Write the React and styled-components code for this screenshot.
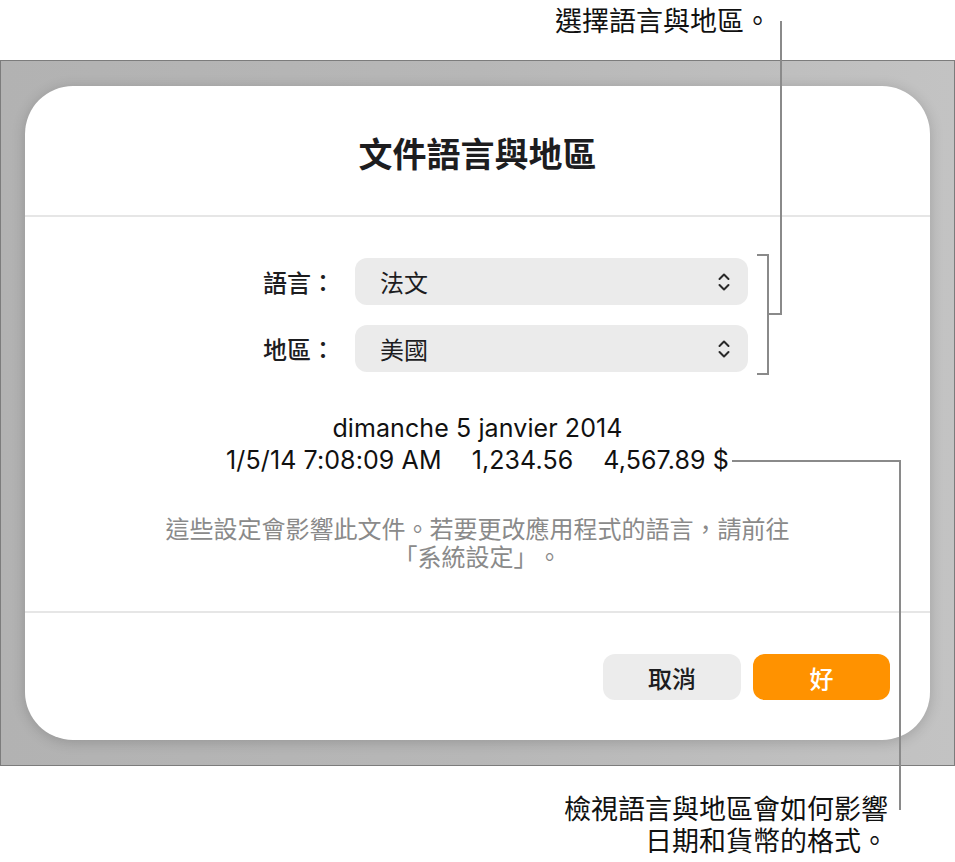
import React from "react";
import styled, { createGlobalStyle } from "styled-components";

const GlobalStyle = createGlobalStyle`
  html, body { margin: 0; padding: 0; background: #ffffff; }
  body { font-family: "Noto Sans CJK TC", "Noto Sans", sans-serif; color: #1d1d1f; text-spacing-trim: space-all; }
  * { box-sizing: border-box; }
`;

const CJK = `"Noto Sans CJK TC", "Noto Sans CJK SC", sans-serif`;
const LATIN = `Inter, "Noto Sans CJK TC", sans-serif`;

const Page = styled.div`
  position: relative;
  width: 955px;
  height: 862px;
  overflow: hidden;
`;

const TopCallout = styled.div`
  height: 60px;
  padding: 4px 0 0 555px;
  font-family: ${CJK};
  font-size: 27px;
  line-height: 32px;
  color: #111;
  text-spacing-trim: space-all;
`;

const Backdrop = styled.div`
  width: 955px;
  height: 706px;
  border: 1px solid #7c7c7c;
  background: linear-gradient(90deg, #b2b2b2 0%, #b7b7b7 50%, #c3c3c3 100%);
  padding: 25px 24px 25px 24px;
`;

const Dialog = styled.div`
  height: 654px;
  background: #ffffff;
  border-radius: 48px;
  box-shadow: 0 2px 14px rgba(0, 0, 0, 0.18);
  display: flex;
  flex-direction: column;
`;

const Header = styled.div`
  height: 131px;
  padding-top: 47px;
  border-bottom: 2px solid #e6e6e6;
  text-align: center;
`;

const Title = styled.h1`
  margin: 0;
  font-family: ${CJK};
  font-size: 34px;
  line-height: 40px;
  font-weight: 700;
  color: #1d1d1f;
`;

const Body = styled.div`
  padding: 41px 0 41px;
  border-bottom: 2px solid #e6e6e6;
  display: flex;
  flex-direction: column;
  align-items: center;
`;

const FormGrid = styled.div`
  align-self: flex-start;
  display: grid;
  grid-template-columns: 310px 393px;
  column-gap: 20px;
  row-gap: 20px;
  align-items: center;
`;

const Label = styled.div`
  text-align: right;
  font-family: ${CJK};
  font-size: 24px;
  font-weight: 500;
  color: #1d1d1f;
  text-spacing-trim: space-all;
`;

const Popup = styled.div`
  height: 47px;
  border-radius: 12px;
  background: #ebebeb;
  display: flex;
  align-items: center;
  justify-content: space-between;
  padding: 0 17px 0 25px;
  font-family: ${CJK};
  font-size: 24px;
  color: #1d1d1f;
`;

const Preview = styled.div`
  margin-top: 40px;
  display: flex;
  flex-direction: column;
  align-items: center;
  font-family: ${LATIN};
  font-size: 25px;
  line-height: 32px;
  color: #111;
  letter-spacing: 0.1px;
`;

const NumberRow = styled.div`
  display: flex;
  gap: 30px;
`;

const Note = styled.p`
  margin: 38px 0 0;
  text-align: center;
  font-family: ${CJK};
  font-size: 24px;
  line-height: 28px;
  color: #8a8a8a;
  text-spacing-trim: space-all;
`;

const Footer = styled.div`
  flex: 1;
  display: flex;
  justify-content: flex-end;
  gap: 12px;
  padding: 41px 40px 0 0;
`;

const Button = styled.button`
  width: ${(p) => (p.$primary ? "137px" : "138px")};
  height: 46px;
  border: none;
  border-radius: 12px;
  background: ${(p) => (p.$primary ? "#ff9200" : "#ececec")};
  color: ${(p) => (p.$primary ? "#ffffff" : "#1d1d1f")};
  font-family: ${CJK};
  font-size: 24px;
  font-weight: 500;
  padding: 0;
`;

const BottomCallout = styled.div`
  margin-top: 26px;
  padding-right: 67px;
  text-align: right;
  font-family: ${CJK};
  font-size: 27px;
  line-height: 32px;
  color: #111;
  text-spacing-trim: space-all;
`;

const Leaders = styled.svg`
  position: absolute;
  left: 0;
  top: 0;
  pointer-events: none;
`;

const Chevrons = () => (
  <svg width="14" height="20" viewBox="0 0 14 20" fill="none" stroke="#2a2a2a" strokeWidth="2" strokeLinecap="round" strokeLinejoin="round">
    <path d="M2.5 7 L7 2.5 L11.5 7" />
    <path d="M2.5 13 L7 17.5 L11.5 13" />
  </svg>
);

export default function App() {
  return (
    <Page>
      <GlobalStyle />
      <TopCallout>選擇語言與地區。</TopCallout>
      <Backdrop>
        <Dialog>
          <Header>
            <Title>文件語言與地區</Title>
          </Header>
          <Body>
            <FormGrid>
              <Label>語言：</Label>
              <Popup>
                <span>法文</span>
                <Chevrons />
              </Popup>
              <Label>地區：</Label>
              <Popup>
                <span>美國</span>
                <Chevrons />
              </Popup>
            </FormGrid>
            <Preview>
              <div>dimanche 5 janvier 2014</div>
              <NumberRow>
                <span>1/5/14 7:08:09 AM</span>
                <span>1,234.56</span>
                <span>4,567.89 $</span>
              </NumberRow>
            </Preview>
            <Note>
              這些設定會影響此文件。若要更改應用程式的語言，請前往
              <br />
              「系統設定」。
            </Note>
          </Body>
          <Footer>
            <Button>取消</Button>
            <Button $primary>好</Button>
          </Footer>
        </Dialog>
      </Backdrop>
      <BottomCallout>
        檢視語言與地區會如何影響
        <br />
        日期和貨幣的格式。
      </BottomCallout>
      <Leaders width="955" height="862" viewBox="0 0 955 862" fill="none" stroke="#8a8a8a" strokeWidth="2">
        <path d="M781 21 V314 H768" />
        <path d="M757 255 H768 V374 H757" />
        <path d="M732 461 H900 V810" />
      </Leaders>
    </Page>
  );
}
